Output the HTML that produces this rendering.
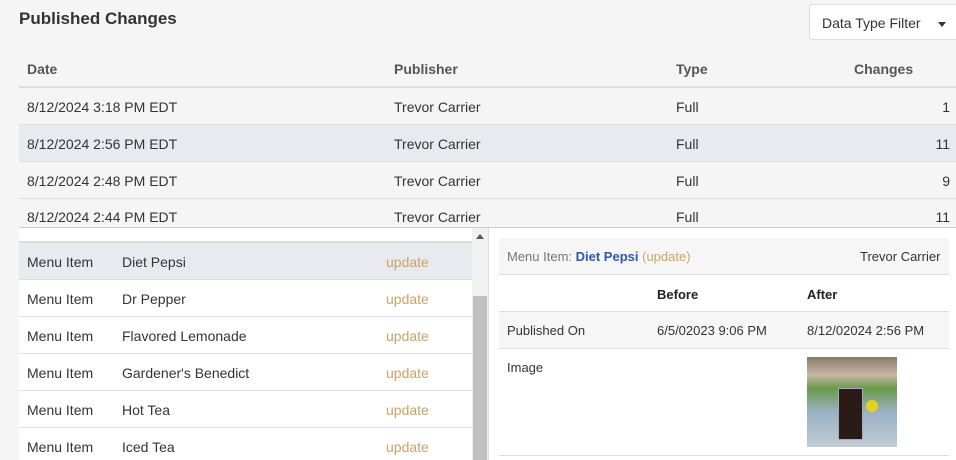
<!DOCTYPE html>
<html style="width:956px;height:460px;overflow:hidden"><head><meta charset="utf-8"><style>
*{margin:0;padding:0;box-sizing:border-box}
body{width:956px;height:460px;overflow:hidden;background:#f5f5f5;font-family:"Liberation Sans",sans-serif;font-size:14px;color:#333;position:relative}
.abs{position:absolute}
h1{position:absolute;left:19px;top:9px;font-size:17px;font-weight:bold;color:#333}
.filter{position:absolute;left:809px;top:4px;width:150px;height:36px;background:#fff;border:1px solid #ddd;border-radius:3px;font-size:14px;padding:10px 0 0 12px;color:#333}
.filter:after{content:"";position:absolute;left:128px;top:17px;border-left:4px solid transparent;border-right:4px solid transparent;border-top:5px solid #333}
.row{position:absolute;left:19px;width:937px;height:37px;border-bottom:1px solid #ddd}
.row span{position:absolute;top:11px}
.lrow{position:absolute;left:19px;width:453px;height:37px;border-bottom:1px solid #ddd;background:#fff}
.lrow span{position:absolute;top:11px}
.upd{color:#c9a367}
</style></head><body>
<h1>Published Changes</h1>
<div class="filter">Data Type Filter</div>
<div class="abs" style="left:27px;top:61px;font-weight:bold;color:#555">Date</div>
<div class="abs" style="left:394px;top:61px;font-weight:bold;color:#555">Publisher</div>
<div class="abs" style="left:676px;top:61px;font-weight:bold;color:#555">Type</div>
<div class="abs" style="left:854px;top:61px;font-weight:bold;color:#555">Changes</div>
<div class="abs" style="left:19px;top:86px;width:937px;height:2px;background:#ddd"></div>
<div class="row" style="top:88px"><span style="left:8px">8/12/2024 3:18 PM EDT</span><span style="left:375px">Trevor Carrier</span><span style="left:657px">Full</span><span style="right:6px">1</span></div>
<div class="row" style="top:125px;background:#e9eaef"><span style="left:8px">8/12/2024 2:56 PM EDT</span><span style="left:375px">Trevor Carrier</span><span style="left:657px">Full</span><span style="right:6px">11</span></div>
<div class="row" style="top:162px"><span style="left:8px">8/12/2024 2:48 PM EDT</span><span style="left:375px">Trevor Carrier</span><span style="left:657px">Full</span><span style="right:6px">9</span></div>
<div class="row" style="top:199px;border:none"><span style="left:8px;top:10px">8/12/2024 2:44 PM EDT</span><span style="left:375px;top:10px">Trevor Carrier</span><span style="left:657px;top:10px">Full</span><span style="right:6px;top:10px">11</span></div>
<div class="abs" style="left:19px;top:227px;width:937px;height:1px;background:#ccc"></div>
<div class="abs" style="left:19px;top:228px;width:453px;height:232px;background:#fff"></div>
<div class="abs" style="left:19px;top:241px;width:453px;height:2px;background:#ddd"></div>
<div class="lrow" style="top:243px;background:#e9eaef"><span style="left:8px">Menu Item</span><span style="left:103px">Diet Pepsi</span><span class="upd" style="left:367px">update</span></div>
<div class="lrow" style="top:280px"><span style="left:8px">Menu Item</span><span style="left:103px">Dr Pepper</span><span class="upd" style="left:367px">update</span></div>
<div class="lrow" style="top:317px"><span style="left:8px">Menu Item</span><span style="left:103px">Flavored Lemonade</span><span class="upd" style="left:367px">update</span></div>
<div class="lrow" style="top:354px"><span style="left:8px">Menu Item</span><span style="left:103px">Gardener's Benedict</span><span class="upd" style="left:367px">update</span></div>
<div class="lrow" style="top:391px"><span style="left:8px">Menu Item</span><span style="left:103px">Hot Tea</span><span class="upd" style="left:367px">update</span></div>
<div class="lrow" style="top:428px;height:32px;border:none"><span style="left:8px">Menu Item</span><span style="left:103px">Iced Tea</span><span class="upd" style="left:367px">update</span></div>
<div class="abs" style="left:472px;top:228px;width:16px;height:232px;background:#f1f1f1"></div>
<div class="abs" style="left:476px;top:234px;border-left:4px solid transparent;border-right:4px solid transparent;border-bottom:5px solid #555"></div>
<div class="abs" style="left:473px;top:296px;width:14px;height:164px;background:#c1c1c1"></div>
<div class="abs" style="left:488px;top:228px;width:1px;height:232px;background:#ddd"></div>
<div class="abs" style="left:489px;top:228px;width:467px;height:232px;background:#fff"></div>
<div class="abs" style="left:499px;top:238px;width:450px;height:37px;background:#f6f6f6;border-bottom:1px solid #ddd"></div>
<div class="abs" style="left:507px;top:249px;font-size:13px;color:#777">Menu Item: <b style="color:#2f55b5">Diet Pepsi</b> <span class="upd">(update)</span></div>
<div class="abs" style="left:860px;top:249px;font-size:13px;color:#333">Trevor Carrier</div>
<div class="abs" style="left:657px;top:287px;font-size:13px;font-weight:bold;color:#222">Before</div>
<div class="abs" style="left:807px;top:287px;font-size:13px;font-weight:bold;color:#222">After</div>
<div class="abs" style="left:499px;top:311px;width:450px;height:38px;background:#f6f6f6;border-top:1px solid #ddd;border-bottom:1px solid #ddd"></div>
<div class="abs" style="left:507px;top:323px;font-size:13px">Published On</div>
<div class="abs" style="left:657px;top:323px;font-size:13px">6/5/02023 9:06 PM</div>
<div class="abs" style="left:807px;top:323px;font-size:13px">8/12/02024 2:56 PM</div>
<div class="abs" style="left:507px;top:360px;font-size:13px">Image</div>
<div class="abs" style="left:807px;top:357px;width:90px;height:90px;background:linear-gradient(#8a7a6a 0,#c9b8a6 20%,#6a9a4a 35%,#9ab0c0 60%,#c0ccd4 100%)"></div>
<div class="abs" style="left:838px;top:388px;width:25px;height:52px;background:#2a1a18;border:1px solid #aab"></div>
<div class="abs" style="left:866px;top:400px;width:12px;height:12px;border-radius:50%;background:#e8d020"></div>
<div class="abs" style="left:499px;top:455px;width:450px;height:1px;background:#ddd"></div>
</body></html>
